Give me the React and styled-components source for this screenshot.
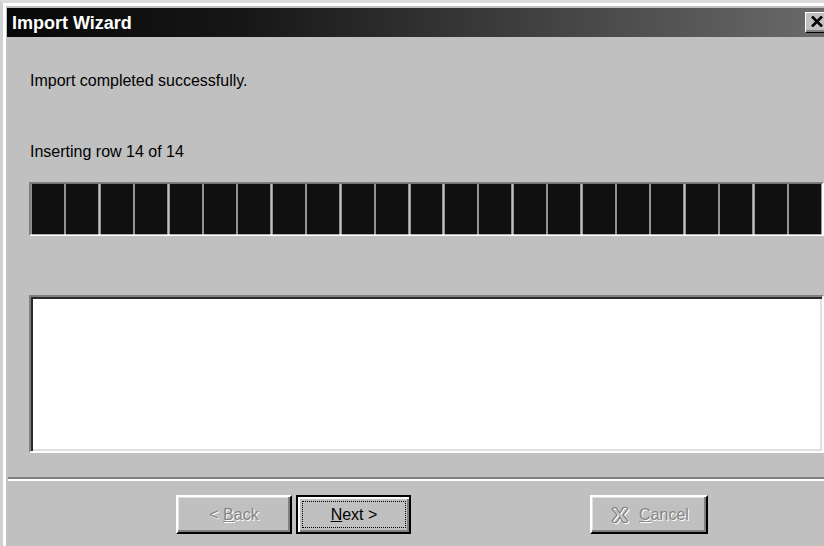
import React from 'react';
import styled, { createGlobalStyle } from 'styled-components';

const GlobalStyle = createGlobalStyle`
  html, body {
    margin: 0;
    padding: 0;
    background: #c0c0c0;
    overflow: hidden;
  }
  body {
    font-family: "Liberation Sans", Arial, sans-serif;
  }
`;

const Window = styled.div`
  width: 841px;
  height: 551px;
  box-sizing: border-box;
  background: #c0c0c0;
  border-style: solid;
  border-width: 3px;
  border-color: #dcdcdc #000 #000 #d0d0d0;
  box-shadow: inset 3px 3px #fff, inset -2px -2px #808080;
  padding: 5px 2px 2px 4px;
  display: flex;
  flex-direction: column;
`;

const TitleBar = styled.div`
  height: 29px;
  flex-shrink: 0;
  display: flex;
  align-items: center;
  padding: 0 4px 0 5px;
  background: linear-gradient(to right, #080808 0%, #161616 28%, #6c6c6c 100%);
`;

const Title = styled.span`
  color: #fff;
  font-weight: bold;
  font-size: 18px;
  line-height: 18px;
  flex-grow: 1;
`;

const CloseButton = styled.div`
  width: 27px;
  height: 21px;
  box-sizing: border-box;
  background: #c0c0c0;
  border-style: solid;
  border-width: 1px;
  border-color: #fff #000 #000 #fff;
  box-shadow: inset -2px -2px #808080;
  display: flex;
  align-items: center;
  justify-content: center;
  padding: 0 3px 2px 0;
`;

const Message = styled.div`
  font-size: 16px;
  line-height: 18px;
  color: #000;
  margin: ${p => p.top}px 0 0 23px;
`;

const ProgressBar = styled.div`
  margin: 21px 0 0 22px;
  width: 795px;
  height: 54px;
  box-sizing: border-box;
  border-style: solid;
  border-width: 2px;
  border-color: #808080 #fff #fff #808080;
  padding: 0 1px;
  display: grid;
  grid-template-columns: repeat(${p => p.count}, 1fr);
  column-gap: 2.5px;
`;

const Block = styled.div`
  background: #101010;
  box-shadow: 0 0 0 0.5px #666;
`;

const LogBox = styled.div`
  margin: 59px 0 0 22px;
  width: 795px;
  height: 158px;
  box-sizing: border-box;
  background: #fff;
  border-style: solid;
  border-width: 2px;
  border-color: #808080 #fff #fff #808080;
  box-shadow: inset 2px 2px #2a2a2a, inset -2px -2px #e0e0e0;
`;

const Separator = styled.div`
  margin: 24px 0 0 1px;
  border-top: 2px solid #808080;
  border-bottom: 2px solid #fff;
`;

const ButtonRow = styled.div`
  margin-top: 14px;
  padding-left: 169px;
  display: flex;
  align-items: flex-start;
`;

const Button = styled.div`
  width: ${p => p.w}px;
  height: 39px;
  margin-left: ${p => p.gap || 0}px;
  box-sizing: border-box;
  background: #c0c0c0;
  border-style: solid;
  border-width: 2px;
  border-color: ${p => (p.primary ? '#000' : '#fff #000 #000 #fff')};
  box-shadow: ${p =>
    p.primary
      ? 'inset 2px 2px #fff, inset -2px -2px #808080'
      : 'inset -2px -2px #808080, inset 1px 1px #dfdfdf'};
  padding: ${p => (p.primary ? '4px 3px 4px 4px' : '3px')};
  display: flex;
`;

const Face = styled.div`
  flex: 1;
  display: flex;
  align-items: center;
  justify-content: center;
  gap: 8px;
  font-size: 16px;
  border: 1px dotted ${p => (p.focused ? '#000' : 'transparent')};
  color: ${p => (p.disabled ? '#858585' : '#000')};
  text-shadow: ${p => (p.disabled ? '1px 1px #fff' : 'none')};
  padding-top: 1px;
`;

const CloseIcon = () => (
  <svg width="12" height="11" viewBox="0 0 12 11">
    <path d="M1 0.5 L11 10.5 M11 0.5 L1 10.5" stroke="#000" strokeWidth="2.6" />
  </svg>
);

// brush-style X used on the Cancel button, drawn embossed (white offset copy under gray)
const CANCEL_X =
  'M3 4 C5 2 7 2 8 4 L11 8 L14 3 C15 2 18 2 19 4 L14 10 L19 16 C18 18 15 18 14 17 L11 12 L8 17 C7 18 4 18 3 16 L8 10 Z';

const CancelIcon = () => (
  <svg width="22" height="20" viewBox="0 0 22 20">
    <path d={CANCEL_X} fill="none" stroke="#fff" strokeWidth="1.3" transform="translate(1 1)" />
    <path d={CANCEL_X} fill="none" stroke="#858585" strokeWidth="1.3" />
  </svg>
);

const BLOCKS = 23;

export default function App() {
  return (
    <>
      <GlobalStyle />
      <Window>
        <TitleBar>
          <Title>Import Wizard</Title>
          <CloseButton>
            <CloseIcon />
          </CloseButton>
        </TitleBar>

        <Message top={35}>Import completed successfully.</Message>
        <Message top={53}>Inserting row 14 of 14</Message>

        <ProgressBar count={BLOCKS}>
          {Array.from({ length: BLOCKS }, (_, i) => (
            <Block key={i} />
          ))}
        </ProgressBar>

        <LogBox />

        <Separator />

        <ButtonRow>
          <Button w={116}>
            <Face disabled>
              <span>&lt; <u>B</u>ack</span>
            </Face>
          </Button>
          <Button w={115} gap={4} primary>
            <Face focused>
              <span><u>N</u>ext &gt;</span>
            </Face>
          </Button>
          <Button w={118} gap={179}>
            <Face disabled>
              <CancelIcon />
              <span><u>C</u>ancel</span>
            </Face>
          </Button>
        </ButtonRow>
      </Window>
    </>
  );
}
